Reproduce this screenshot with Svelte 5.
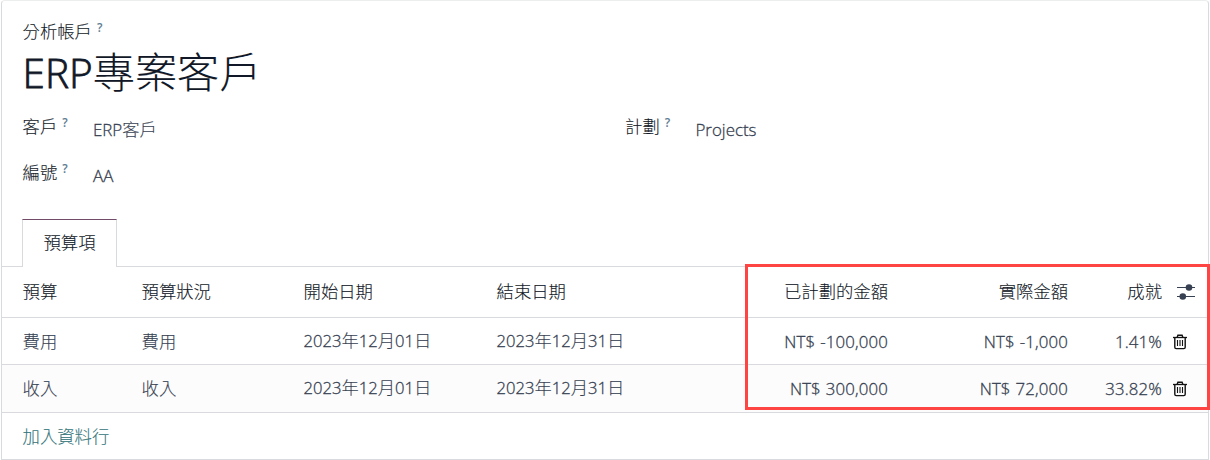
<script>
  const fields = [
    { label: '客戶', value: 'ERP客戶' },
    { label: '計劃', value: 'Projects' },
    { label: '編號', value: 'AA' }
  ];
  const heads = ['預算', '預算狀況', '開始日期', '結束日期', '已計劃的金額', '實際金額', '成就'];
  const rows = [
    ['費用', '費用', '2023年12月01日', '2023年12月31日', 'NT$ -100,000', 'NT$ -1,000', '1.41%'],
    ['收入', '收入', '2023年12月01日', '2023年12月31日', 'NT$ 300,000', 'NT$ 72,000', '33.82%']
  ];
  // Latin and Han runs are set at slightly different sizes.
  const runs = (text) => text.match(/[\x20-\x7e]+|[^\x20-\x7e]+/g);
</script>

{#snippet mixed(text)}{#each runs(text) as run}<span class:lat={run.charCodeAt(0) < 127}>{run}</span>{/each}{/snippet}

<main class="sheet">
  <section class="top">
    <div class="label">分析帳戶<sup>?</sup></div>
    <h1>{@render mixed('ERP專案客戶')}</h1>
    <div class="fields">
      {#each fields as f}
        <div class="field">
          <div class="label">{f.label}<sup>?</sup></div>
          <div class="value">{@render mixed(f.value)}</div>
        </div>
      {/each}
    </div>
  </section>
  <nav><button class="tab">預算項</button></nav>
  <div class="table">
    <div class="row head">
      {#each heads as h, i}<div class="cell" class:num={i > 3}>{h}</div>{/each}
      <div class="icon">
        <svg class="sliders" width="20" height="18" viewBox="0 0 20 18">
          <path d="M1 5.5H19M1 14.5H19" stroke="#374151" stroke-width="1.1" />
          <circle cx="13" cy="5.5" r="3.3" fill="#374151" /><circle cx="6.8" cy="14.5" r="3.3" fill="#374151" />
        </svg>
      </div>
    </div>
    {#each rows as r, n}
      <div class="row body" class:odd={n === 1}>
        {#each r as c, i}<div class="cell" class:num={i > 3}>{@render mixed(c)}</div>{/each}
        <div class="icon">
          <svg width="14" height="16" viewBox="0 0 14 16" fill="none" stroke="#111">
            <path d="M0 3.5H14" stroke-width="1.3" />
            <path d="M4.2 3.2L4.9 1.2H9.1L9.8 3.2" stroke-width="1.4" />
            <path d="M1.8 4V13.2Q1.8 14.6 3.2 14.6H10.8Q12.2 14.6 12.2 13.2V4" stroke-width="1.4" />
            <path d="M4.5 6V12M7 6V12M9.5 6V12" stroke-width="1.1" />
          </svg>
        </div>
      </div>
    {/each}
    <div class="add">加入資料行</div>
  </div>
  <div class="highlight"></div>
</main>

<style>
  :global(body) { background: #fff; overflow: hidden; }
  .sheet {
    position: relative; box-sizing: border-box; width: 1208px; height: 460px; margin-left: 1px;
    border: 1px solid #d8dadd; border-top-color: #eceded; border-radius: 4px 4px 0 0;
    font: 300 17.33px/26px "Noto Sans CJK TC", sans-serif; color: #374151;
    -webkit-text-stroke: 0.1px;
  }
  .lat { font-family: "Open Sans", sans-serif; font-size: 16.6px; font-weight: 300; -webkit-text-stroke: 0.3px; }
  .value .lat { font-size: 16.9px; }
  .top { box-sizing: border-box; height: 218px; padding: 17px 20.6px 0; }
  .label { color: #111827; white-space: nowrap; }
  sup { margin-left: 5px; font: 600 12px/12px "Open Sans", sans-serif; color: #5e7d92; vertical-align: 6px; -webkit-text-stroke: 0; }
  h1 { margin: -3px 0 0; height: 60px; font-size: 42.2px; line-height: 58px; font-weight: 300; color: #111827; white-space: nowrap; -webkit-text-stroke: 0.1px; }
  h1 .lat { font-size: 40.5px; -webkit-text-stroke: 0.8px; }
  .fields { display: grid; grid-template-columns: 602.5px 1fr; grid-auto-rows: 46px; padding-top: 12px; }
  .field { display: grid; grid-template-columns: 70.4px 1fr; }
  .value { padding-top: 3px; white-space: nowrap; }
  nav { height: 47px; padding-left: 20px; border-bottom: 1px solid #d8dadd; }
  .tab {
    display: block; box-sizing: border-box; width: 95px; height: 48px; padding: 0 0 3px; background: #fff;
    border: 1px solid #d8dadd; border-top-color: #714b67; border-bottom: 0; font: inherit; color: #111827;
  }
  .row { display: grid; grid-template-columns: 119px 162px 193px 228.4px 163px 180px 94px 1fr; align-items: center; padding: 0 0 1px 20.6px; box-sizing: border-box; border-bottom: 1px solid #d8dadd; }
  .head { height: 51px; padding-bottom: 3px; color: #111827; }
  .body { height: 47px; }
  .odd { height: 48px; padding-bottom: 2px; background: #fcfcfc; }
  .cell { white-space: nowrap; }
  .num { text-align: right; }
  .body .num { padding-top: 1px; }
  .num .lat { letter-spacing: 0.15px; word-spacing: 0.5px; font-size: 16.8px; }
  .icon { display: flex; padding-left: 11px; }
  .body .icon { padding-top: 2px; }
  .sliders { margin-left: 3px; }
  .add { height: 46px; padding-left: 20.6px; line-height: 45px; color: #32747a; }
  .highlight { position: absolute; left: 743px; top: 263px; width: 459px; height: 140px; border: 3px solid #ff4444; }
</style>
